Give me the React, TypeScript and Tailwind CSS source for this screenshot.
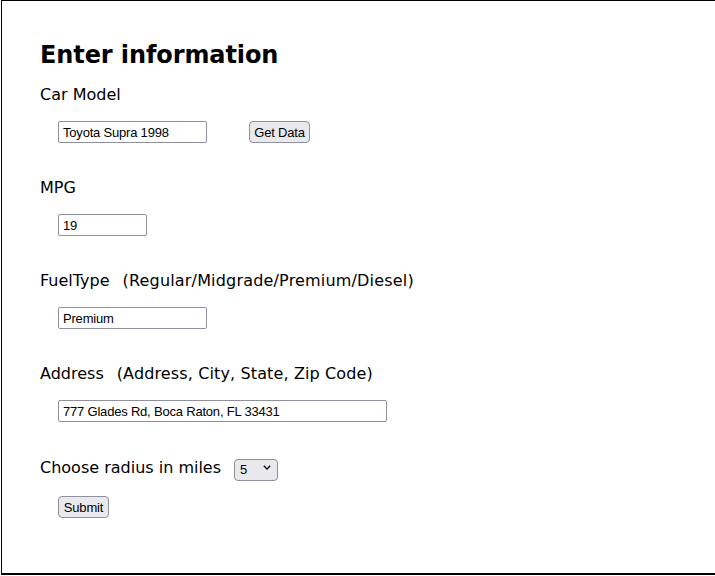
import React from "react";

const labelFont = { fontFamily: '"DejaVu Sans", Verdana, sans-serif' };
const ctrlFont = { fontFamily: '"Liberation Sans", Tahoma, Arial, sans-serif' };

function TextInput({ value, w }: { value: string; w: string }) {
  return (
    <input
      readOnly
      value={value}
      style={ctrlFont}
      className={`${w} h-[22px] border border-[#8f8f9d] rounded-[2px] bg-white pl-[4px] pr-[2px] text-[13px] tracking-[-0.2px] text-black outline-none`}
    />
  );
}

function Btn({ label, w }: { label: string; w: string }) {
  return (
    <button
      type="button"
      style={ctrlFont}
      className={`${w} h-[22px] border border-[#8f8f9d] rounded-[4px] bg-[#e9e9ed] text-[13px] tracking-[-0.2px] text-black flex items-center justify-center leading-none`}
    >
      {label}
    </button>
  );
}

function Label({ children }: { children: React.ReactNode }) {
  return (
    <div style={labelFont} className="h-[19px] text-[16px] leading-[19px] text-black whitespace-nowrap">
      {children}
    </div>
  );
}

export default function App() {
  return (
    <div className="w-[715px] h-[576px] overflow-hidden bg-white">
      <div className="ml-[1px] w-[800px] h-[575px] border-t border-l border-b-2 border-black pl-[38px] pt-[40px]">
        <h1 style={labelFont} className="text-[24px] leading-[28px] font-bold text-black tracking-[-0.1px]">
          Enter information
        </h1>

        <div className="mt-[16px]">
          <Label>Car Model</Label>
          <div className="mt-[17px] ml-[18px] flex items-center">
            <TextInput value="Toyota Supra 1998" w="w-[149px]" />
            <div className="ml-[42px]">
              <Btn label="Get Data" w="w-[61px]" />
            </div>
          </div>
        </div>

        <div className="mt-[35px]">
          <Label>MPG</Label>
          <div className="mt-[17px] ml-[18px] flex">
            <TextInput value="19" w="w-[89px]" />
          </div>
        </div>

        <div className="mt-[35px]">
          <Label>
            FuelType<span className="ml-[13px] tracking-[0.18px]">(Regular/Midgrade/Premium/Diesel)</span>
          </Label>
          <div className="mt-[17px] ml-[18px] flex">
            <TextInput value="Premium" w="w-[149px]" />
          </div>
        </div>

        <div className="mt-[35px]">
          <Label>
            Address<span className="ml-[13px] tracking-[0.13px]">(Address, City, State, Zip Code)</span>
          </Label>
          <div className="mt-[17px] ml-[18px] flex">
            <TextInput value="777 Glades Rd, Boca Raton, FL 33431" w="w-[329px]" />
          </div>
        </div>

        <div className="mt-[34px] h-[22px] flex items-center">
          <Label>Choose radius in miles</Label>
          <div className="relative ml-[13px] w-[44px] h-[22px]">
            <select
              style={ctrlFont}
              defaultValue="5"
              className="appearance-none w-[44px] h-[22px] border border-[#8f8f9d] rounded-[4px] bg-[#e9e9ed] pl-[5px] text-[13px] text-black outline-none"
            >
              <option value="5">5</option>
              <option value="10">10</option>
              <option value="25">25</option>
            </select>
            <svg
              className="absolute left-[29px] top-[9px] pointer-events-none"
              width="8"
              height="5"
              viewBox="0 0 8 5"
            >
              <path d="M0.8 0.8 L4 4 L7.2 0.8" fill="none" stroke="#000" strokeWidth="1.3" />
            </svg>
          </div>
        </div>

        <div className="mt-[18px] ml-[18px]">
          <Btn label="Submit" w="w-[51px]" />
        </div>
      </div>
    </div>
  );
}
